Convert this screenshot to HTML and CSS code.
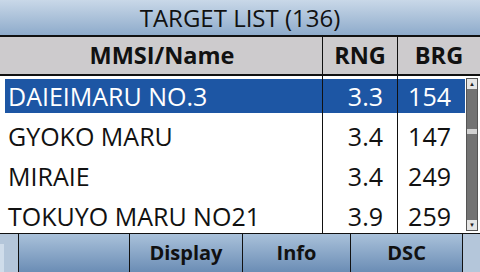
FILE: index.html
```html
<!DOCTYPE html>
<html lang="en">
<head>
  <meta charset="UTF-8" />
  <title>Target List</title>
  <link rel="stylesheet" href="styles.css">
</head>
<body>
  <div class="screen">
    <div class="title">TARGET LIST (136)</div>

    <div class="head">
      <div class="cell name">MMSI/Name</div>
      <div class="cell rng">RNG</div>
      <div class="cell brg">BRG</div>
    </div>

    <div class="body">
      <div class="rows">
        <div class="row selected">
          <div class="cell name">DAIEIMARU NO.3</div>
          <div class="cell rng">3.3</div>
          <div class="cell brg">154</div>
        </div>
        <div class="row">
          <div class="cell name">GYOKO MARU</div>
          <div class="cell rng">3.4</div>
          <div class="cell brg">147</div>
        </div>
        <div class="row">
          <div class="cell name">MIRAIE</div>
          <div class="cell rng">3.4</div>
          <div class="cell brg">249</div>
        </div>
        <div class="row">
          <div class="cell name">TOKUYO MARU NO21</div>
          <div class="cell rng">3.9</div>
          <div class="cell brg">259</div>
        </div>
      </div>

      <!-- scroll bar -->
      <div class="scrollbar">
        <div class="arrow">&#9650;</div>
        <div class="track"><div class="thumb"></div></div>
        <div class="arrow">&#9660;</div>
      </div>
    </div>

    <div class="keys">
      <div class="key edge"><span class="edge-in"></span></div>
      <div class="key"></div>
      <div class="key">Display</div>
      <div class="key">Info</div>
      <div class="key">DSC</div>
      <div class="key edge"></div>
    </div>
  </div>
</body>
</html>
```

FILE: styles.css
```css
body {
  margin: 0;
  font-family: "Open Sans", "Noto Sans", sans-serif;
  background-color: #fff;
}

.screen {
  width: 480px;
  height: 272px;
  display: flex;
  flex-direction: column;
  overflow: hidden;
}

.title {
  height: 35px;
  border-bottom: 2px solid #111;
  background: linear-gradient(#c9d8e8, #8eabcb);
  text-align: center;
  font-size: 24px;
  line-height: 36px;
  color: #111;
}

.head {
  height: 37px;
  display: grid;
  grid-template-columns: 322px 75px 1fr;
  background-color: #cdcbcd;
  border-bottom: 2px solid #111;
  font-weight: bold;
  font-size: 23.5px;
  line-height: 37px;
  color: #111;
}

.head .name {
  text-align: center;
  padding-left: 2px;
}

.head .rng,
.head .brg {
  border-left: 1px solid #111;
  text-align: center;
}

.body {
  flex: 1;
  display: flex;
  position: relative;
  border-bottom: 1px solid #111;
}

.rows {
  flex: 1;
  display: flex;
  flex-direction: column;
  gap: 6px;
  padding: 3px 0 0 5px;
}

.row {
  height: 34px;
  display: grid;
  grid-template-columns: 317px 75px 1fr;
  font-size: 25px;
  line-height: 34px;
  color: #111;
}

.row .name {
  padding-left: 3px;
  white-space: nowrap;
}

.row .rng,
.row .brg {
  text-align: right;
  padding-right: 14px;
}

.row.selected {
  background-color: #1d56a4;
  color: #fff;
}

/* column lines run through the whole list */
.body::before,
.body::after {
  content: "";
  position: absolute;
  top: 0;
  bottom: 0;
  width: 1px;
  background-color: #111;
}

.body::before {
  left: 322px;
}

.body::after {
  left: 397px;
}

.scrollbar {
  width: 10px;
  margin: 2px 2px 2px 1px;
  display: flex;
  flex-direction: column;
  border: 1px solid #555;
  background-color: #737373;
}

.arrow {
  height: 10px;
  background-color: #e4e4e4;
  font-size: 6px;
  line-height: 10px;
  text-align: center;
  color: #222;
}

.track {
  flex: 1;
  padding-top: 40px;
}

.thumb {
  height: 5px;
  background-color: #d2d2d2;
}

.keys {
  height: 38px;
  display: flex;
  background: linear-gradient(#a9c1da, #6b8db5);
}

.key {
  width: 112px;
  border-left: 1px solid #111;
  text-align: center;
  font-weight: bold;
  font-size: 20px;
  line-height: 38px;
  color: #111;
}

.key:nth-child(2) {
  width: 111px;
}

.key:nth-child(3) {
  width: 113px;
}

.key:nth-child(4) {
  width: 108px;
}

.key.edge {
  width: 17px;
  background: #b4c6da;
}

.key.edge:first-child {
  border-left: none;
  width: 18px;
  display: flex;
  align-items: flex-end;
}

.edge-in {
  display: block;
  width: 4px;
  height: 28px;
  background-color: #cfdcea;
}
```
